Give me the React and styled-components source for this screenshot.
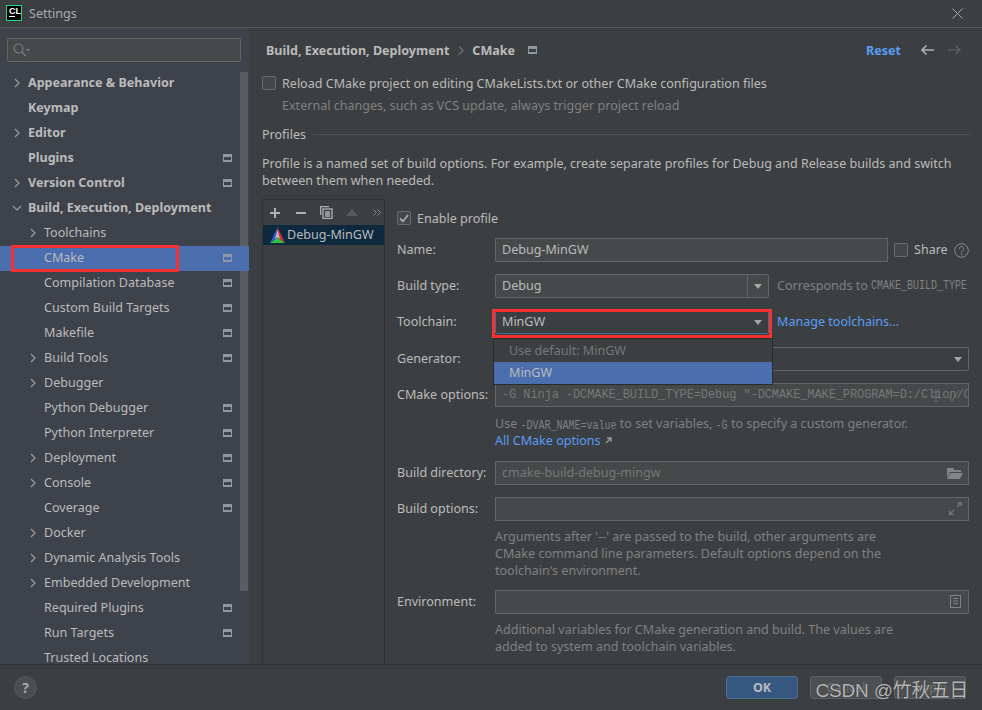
import React from 'react';
import styled, { createGlobalStyle } from 'styled-components';

const GlobalStyle = createGlobalStyle`
  html, body {
    margin: 0;
    padding: 0;
    background: #3c3f41;
  }
  * {
    box-sizing: border-box;
  }
`;

const Window = styled.div`
  position: relative;
  display: flex;
  flex-direction: column;
  width: 982px;
  height: 710px;
  overflow: hidden;
  background: #3c3f41;
  color: #bbbbbb;
  font-family: "Noto Sans", "Open Sans", sans-serif;
  font-size: 12.55px;
`;

const TitleBar = styled.div`
  display: flex;
  align-items: center;
  flex: 0 0 28px;
  padding: 0 19px 1px 6px;
  border-bottom: 1px solid #555759;
`;

const Logo = styled.div`
  display: flex;
  flex-direction: column;
  width: 16px;
  height: 16px;
  padding: 1px 0 0 2px;
  background: #000;
  border: 1px solid #21d789;
  color: #fff;
  font-family: "Liberation Sans", sans-serif;
  font-size: 9px;
  font-weight: 700;
  line-height: 8px;
  &::after {
    content: '';
    width: 6px;
    height: 1px;
    margin-top: 1px;
    background: #fff;
  }
`;

const WindowTitle = styled.span`
  margin-left: 7px;
  color: #a9abad;
`;

const CloseButton = styled.svg`
  margin-left: auto;
`;

const Body = styled.div`
  display: flex;
  flex: 1;
  min-height: 0;
`;

const Sidebar = styled.aside`
  position: relative;
  flex: 0 0 249px;
  overflow: hidden;
  background: #3e424b;
`;

const SearchBox = styled.div`
  display: flex;
  align-items: center;
  height: 24px;
  margin: 10px 8px 9px 7px;
  padding-left: 5px;
  background: #45494a;
  border: 1px solid #646464;
  border-radius: 2px;
`;

const Scrollbar = styled.div`
  position: absolute;
  top: 44px;
  right: 1px;
  width: 8px;
  height: 519px;
  background: #595c62;
`;

const Tree = styled.div`
  display: flex;
  flex-direction: column;
`;

const TreeRow = styled.div`
  position: relative;
  display: flex;
  align-items: center;
  flex: 0 0 25px;
  padding-left: ${({ $depth }) => 12 + $depth * 16}px;
  padding-right: 17px;
  padding-bottom: 2px;
  background: ${({ $selected }) => ($selected ? '#4b6eaf' : 'transparent')};
  font-weight: ${({ $depth }) => ($depth === 0 ? 700 : 400)};
  white-space: nowrap;
`;

const Arrow = styled.span`
  display: flex;
  flex: 0 0 16px;
  align-items: center;
`;

const SideBadge = styled.svg`
  margin-left: auto;
`;

const CrumbBadge = styled.svg`
  margin-left: 13px;
`;

const RedBox = styled.div`
  position: absolute;
  top: ${({ $top }) => $top}px;
  left: ${({ $left }) => $left}px;
  width: ${({ $w }) => $w}px;
  height: ${({ $h }) => $h}px;
  border: 3px solid #f73131;
  pointer-events: none;
  z-index: 3;
`;

const Main = styled.main`
  display: flex;
  flex: 1;
  flex-direction: column;
  min-width: 0;
  padding: 0 12px 0 13px;
`;

const Breadcrumb = styled.div`
  display: flex;
  align-items: center;
  flex: 0 0 44px;
  padding-left: 4px;
  font-weight: 700;
`;

const CrumbSep = styled.svg`
  margin: 0 8px 0 9px;
`;

const ResetLink = styled.span`
  margin-left: auto;
  color: #589df6;
  font-weight: 700;
`;

const NavIcons = styled.div`
  display: flex;
  gap: 14px;
  margin: 0 8px 0 19px;
`;

const CheckRow = styled.label`
  display: flex;
  align-items: center;
  gap: 6px;
  height: ${({ $h }) => $h}px;
`;

const Check = styled.span`
  display: flex;
  align-items: center;
  justify-content: center;
  flex: 0 0 14px;
  height: 14px;
  margin-left: ${({ $left = 0 }) => $left}px;
  background: #43494a;
  border: 1px solid #6b6b6b;
  border-radius: 2px;
`;

const SubText = styled.div`
  height: 22px;
  padding-left: 20px;
  color: #808080;
  line-height: 24px;
`;

const GroupTitle = styled.div`
  display: flex;
  align-items: center;
  gap: 7px;
  height: 18px;
  margin-top: 9px;
  &::after {
    content: '';
    flex: 1;
    height: 1px;
    background: #515151;
  }
`;

const Paragraph = styled.p`
  margin: 12px 0 0;
  line-height: 17px;
`;

const ProfilesArea = styled.div`
  display: flex;
  flex: 1;
  min-height: 0;
  margin-top: 10px;
`;

const ProfileList = styled.div`
  flex: 0 0 123px;
  background: #3c3f41;
  border: 1px solid #323232;
  border-bottom: 0;
`;

const ListToolbar = styled.div`
  display: flex;
  align-items: center;
  height: 25px;
  padding-left: 6px;
`;

const ToolIcon = styled.svg`
  margin-left: ${({ $left = 0 }) => $left}px;
`;

const ProfileItem = styled.div`
  display: flex;
  align-items: center;
  gap: 2px;
  height: 20px;
  padding: 0 0 1px 7px;
  background: #0d293e;
`;

const Form = styled.div`
  display: flex;
  flex: 1;
  flex-direction: column;
  min-width: 0;
  margin-left: 12px;
  padding: 9px 1px 0 0;
`;

const Row = styled.div`
  display: flex;
  align-items: center;
  height: 24px;
  margin-top: ${({ $top = 12 }) => $top}px;
`;

const Label = styled.span`
  flex: 0 0 98px;
  padding-bottom: 1px;
`;

const Field = styled.div`
  position: relative;
  display: flex;
  align-items: center;
  flex: ${({ $w }) => ($w ? `0 0 ${$w}px` : 1)};
  height: 24px;
  min-width: 0;
  padding: 0 6px 1px;
  overflow: hidden;
  background: ${({ $flat }) => ($flat ? '#3c3f41' : '#45494a')};
  border: 1px solid ${({ $focus }) => ($focus ? '#466d94' : '#646464')};
  border-radius: ${({ $round }) => ($round ? '2px' : '0')};
  color: ${({ $dim }) => ($dim ? '#777777' : '#bbbbbb')};
  white-space: nowrap;
`;

const MonoValue = styled.span`
  font-family: "Liberation Mono", monospace;
  font-size: 12px;
  letter-spacing: -0.1px;
`;

const FieldIcon = styled.svg`
  position: absolute;
  top: 4px;
  right: ${({ $right = 5 }) => $right}px;
`;

const ComboArrow = styled.div`
  position: absolute;
  top: 0;
  right: 0;
  bottom: 0;
  display: flex;
  align-items: center;
  justify-content: center;
  width: 21px;
  border-left: ${({ $split }) => ($split ? '1px solid #646464' : '0')};
  background: ${({ $flat }) => ($flat ? '#3c3f41' : '#45494a')};
  &::after {
    content: '';
    border-left: 4px solid transparent;
    border-right: 4px solid transparent;
    border-top: 5px solid #a6a6a6;
  }
`;

const FieldWrap = styled.div`
  position: relative;
  display: flex;
  flex: 0 0 ${({ $w }) => $w}px;
  min-width: 0;
`;

const Popup = styled.div`
  position: absolute;
  top: 28px;
  left: -2px;
  width: 280px;
  height: 47px;
  padding: 1px 0 0;
  background: #3c3f41;
  border: 1px solid #2b2b2b;
  z-index: 2;
`;

const PopupItem = styled.div`
  display: flex;
  align-items: center;
  height: 22px;
  padding: 0 0 1px 15px;
  background: ${({ $active }) => ($active ? '#4b6eaf' : 'transparent')};
  color: ${({ $active }) => ($active ? '#bbbbbb' : '#777777')};
`;

const ManageLink = styled.span`
  margin-left: 8px;
  padding-bottom: 1px;
  color: #589df6;
`;

const NoteAfter = styled.span`
  display: flex;
  align-items: center;
  gap: 3px;
  margin-left: 8px;
  padding-bottom: 1px;
  color: #808080;
  white-space: nowrap;
`;

const SmallMono = styled.span`
  display: inline-block;
  font-family: "Liberation Mono", monospace;
  font-size: 10px;
  line-height: 10px;
  transform: scaleY(1.25);
`;

const ShareLabel = styled.span`
  margin: 0 6px;
  padding-bottom: 1px;
`;

const Hint = styled.div`
  margin: ${({ $top = 7 }) => $top}px 0 0 98px;
  color: #808080;
  line-height: 17px;
`;

const HintLink = styled.span`
  display: flex;
  align-items: center;
  gap: 4px;
  height: 17px;
  color: #589df6;
`;

const Footer = styled.footer`
  display: flex;
  align-items: center;
  flex: 0 0 46px;
  padding: 0 16px 0 14px;
  border-top: 1px solid #323232;
`;

const HelpButton = styled.div`
  display: flex;
  align-items: center;
  justify-content: center;
  width: 23px;
  height: 23px;
  margin-right: auto;
  background: #4b4e50;
  border: 1px solid #555759;
  border-radius: 50%;
  color: #a8a8a8;
  font-weight: 700;
  font-size: 14px;
`;

const DialogButton = styled.button`
  width: 72px;
  height: 23px;
  margin-left: 12px;
  padding: 0;
  background: ${({ $primary }) => ($primary ? '#365880' : '#4c5052')};
  border: 1px solid ${({ $primary }) => ($primary ? '#4c708c' : '#5e6060')};
  border-radius: 3px;
  color: ${({ $primary }) => ($primary ? '#bbbbbb' : '#6f7274')};
  font-family: inherit;
  font-size: 12.5px;
  font-weight: ${({ $primary }) => ($primary ? 700 : 400)};
`;

const Watermark = styled.div`
  position: absolute;
  right: 14px;
  bottom: 8px;
  color: rgba(214, 214, 214, 0.82);
  font-family: "Liberation Sans", "Noto Sans CJK SC", sans-serif;
  font-size: 19px;
  letter-spacing: -0.2px;
  text-shadow: 0 0 1px #222;
  z-index: 4;
`;

const Chevron = ({ open }) => (
  <svg width="10" height="10" viewBox="0 0 10 10" fill="none" stroke="#9a9da0" strokeWidth="1.2">
    {open ? <path d="M1 3l4 4 4-4" /> : <path d="M3 1l4 4-4 4" />}
  </svg>
);

const TREE = [
  { label: 'Appearance & Behavior', depth: 0, arrow: 'closed' },
  { label: 'Keymap', depth: 0 },
  { label: 'Editor', depth: 0, arrow: 'closed' },
  { label: 'Plugins', depth: 0, badge: true },
  { label: 'Version Control', depth: 0, arrow: 'closed', badge: true },
  { label: 'Build, Execution, Deployment', depth: 0, arrow: 'open' },
  { label: 'Toolchains', depth: 1, arrow: 'closed' },
  { label: 'CMake', depth: 1, badge: true, selected: true },
  { label: 'Compilation Database', depth: 1, badge: true },
  { label: 'Custom Build Targets', depth: 1, badge: true },
  { label: 'Makefile', depth: 1, badge: true },
  { label: 'Build Tools', depth: 1, arrow: 'closed', badge: true },
  { label: 'Debugger', depth: 1, arrow: 'closed' },
  { label: 'Python Debugger', depth: 1, badge: true },
  { label: 'Python Interpreter', depth: 1, badge: true },
  { label: 'Deployment', depth: 1, arrow: 'closed', badge: true },
  { label: 'Console', depth: 1, arrow: 'closed', badge: true },
  { label: 'Coverage', depth: 1, badge: true },
  { label: 'Docker', depth: 1, arrow: 'closed' },
  { label: 'Dynamic Analysis Tools', depth: 1, arrow: 'closed' },
  { label: 'Embedded Development', depth: 1, arrow: 'closed' },
  { label: 'Required Plugins', depth: 1, badge: true },
  { label: 'Run Targets', depth: 1, badge: true },
  { label: 'Trusted Locations', depth: 1 },
];

export default function App() {
  return (
    <>
      <GlobalStyle />
      <Window>
        <TitleBar>
          <Logo>CL</Logo>
          <WindowTitle>Settings</WindowTitle>
          <CloseButton width="11" height="11" viewBox="0 0 11 11" stroke="#a9a9a9" strokeWidth="1">
            <path d="M.5.5l10 10M10.5.5l-10 10" />
          </CloseButton>
        </TitleBar>
        <Body>
          <Sidebar>
            <SearchBox>
              <svg width="17" height="14" viewBox="0 0 17 14" fill="none" stroke="#7d7f81" strokeWidth="1.2">
                <circle cx="5.5" cy="5.5" r="4.5" />
                <path d="M9 9l3.5 4" />
                <path d="M13 6h4l-2 2.5z" fill="#7d7f81" stroke="none" />
              </svg>
            </SearchBox>
            <Scrollbar />
            <Tree>
              {TREE.map((item) => (
                <TreeRow key={item.label} $depth={item.depth} $selected={item.selected}>
                  <Arrow>{item.arrow && <Chevron open={item.arrow === 'open'} />}</Arrow>
                  {item.label}
                  {item.badge && (
                    <SideBadge width="9" height="8" viewBox="0 0 9 8">
                      <rect width="9" height="8" fill="#8f97a0" />
                      <rect x="1" y="3" width="7" height="3" fill={item.selected ? '#4b6eaf' : '#3e424b'} />
                    </SideBadge>
                  )}
                  {item.selected && <RedBox $top={-1} $left={11} $w={168} $h={27} />}
                </TreeRow>
              ))}
            </Tree>
          </Sidebar>
          <Main>
            <Breadcrumb>
              <span>Build, Execution, Deployment</span>
              <CrumbSep width="6" height="9" viewBox="0 0 6 9" fill="none" stroke="#9a9da0">
                <path d="M1 .5l4 4-4 4" />
              </CrumbSep>
              <span>CMake</span>
              <CrumbBadge width="9" height="8" viewBox="0 0 9 8">
                <rect width="9" height="8" fill="#8f97a0" />
                <rect x="1" y="3" width="7" height="3" fill="#3c3f41" />
              </CrumbBadge>
              <ResetLink>Reset</ResetLink>
              <NavIcons>
                <svg width="14" height="12" viewBox="0 0 14 12" fill="none" stroke="#afb1b3" strokeWidth="1.6">
                  <path d="M14 6H2M6.500 1.500L2 6l4.500 4.500" />
                </svg>
                <svg width="14" height="12" viewBox="0 0 14 12" fill="none" stroke="#5a5d5f" strokeWidth="1.6">
                  <path d="M0 6h12M7.500 1.500L12 6l-4.500 4.500" />
                </svg>
              </NavIcons>
            </Breadcrumb>
            <CheckRow $h={22}>
              <Check />
              Reload CMake project on editing CMakeLists.txt or other CMake configuration files
            </CheckRow>
            <SubText>External changes, such as VCS update, always trigger project reload</SubText>
            <GroupTitle>Profiles</GroupTitle>
            <Paragraph>
              Profile is a named set of build options. For example, create separate profiles for Debug and Release builds and switch
              <br />
              between them when needed.
            </Paragraph>
            <ProfilesArea>
              <ProfileList>
                <ListToolbar>
                  <ToolIcon width="12" height="12" viewBox="0 0 12 12" stroke="#afb1b3" strokeWidth="2"><path d="M6 1v10M1 6h10" /></ToolIcon>
                  <ToolIcon $left={14} width="12" height="12" viewBox="0 0 12 12" stroke="#afb1b3" strokeWidth="2"><path d="M1 6h10" /></ToolIcon>
                  <ToolIcon $left={13} width="13" height="13" viewBox="0 0 13 13" fill="none" stroke="#afb1b3" strokeWidth="1.300">
                    <path d="M.7 9V.7H9" />
                    <rect x="3" y="3" width="9" height="9.500" />
                    <path d="M5 6h5M5 8h5M5 10h5" />
                  </ToolIcon>
                  <ToolIcon $left={13} width="12" height="7" viewBox="0 0 12 7"><path d="M6 0l6 7H0z" fill="#595b5d" /></ToolIcon>
                  <ToolIcon $left={15} width="8" height="7" viewBox="0 0 8 7" fill="none" stroke="#8a8c8e"><path d="M.5.500l3 3-3 3M4.500.500l3 3-3 3" /></ToolIcon>
                </ListToolbar>
                <ProfileItem>
                  <svg width="15" height="16" viewBox="0 0 15 16">
                    <path d="M7.500 0L0 16l7.500-5z" fill="#3557d6" />
                    <path d="M7.500 0L15 16l-7.500-5z" fill="#d62f2f" />
                    <path d="M0 16h15l-7.500-5z" fill="#2fc43b" />
                    <path d="M7.500 3L5 12l2.500-1.500L10 12z" fill="#b9bcc0" />
                  </svg>
                  Debug-MinGW
                </ProfileItem>
              </ProfileList>
              <Form>
                <CheckRow $h={20}>
                  <Check>
                    <svg width="10" height="9" viewBox="0 0 10 9" fill="none" stroke="#a9a9a9" strokeWidth="1.800"><path d="M1 4.500l3 3 5-6.500" /></svg>
                  </Check>
                  Enable profile
                </CheckRow>
                <Row $top={10}>
                  <Label>Name:</Label>
                  <Field $w={393}>Debug-MinGW</Field>
                  <Check $left={6} />
                  <ShareLabel>Share</ShareLabel>
                  <svg width="15" height="15" viewBox="0 0 15 15" fill="none">
                    <circle cx="7.500" cy="7.500" r="6.800" stroke="#8c8e90" />
                    <path d="M5.300 5.800a2.200 2.200 0 1 1 3.400 1.800c-.8.500-1.200.9-1.200 1.900M7.500 10.500v1.500" stroke="#8c8e90" />
                  </svg>
                </Row>
                <Row>
                  <Label>Build type:</Label>
                  <Field $w={274} $round>
                    Debug
                    <ComboArrow $split />
                  </Field>
                  <NoteAfter>
                    Corresponds to <SmallMono>CMAKE_BUILD_TYPE</SmallMono>
                  </NoteAfter>
                </Row>
                <Row>
                  <Label>Toolchain:</Label>
                  <FieldWrap $w={274}>
                    <Field $focus $flat $round>
                      MinGW
                      <ComboArrow $flat />
                    </Field>
                    <RedBox $top={-1} $left={-3} $w={280} $h={29} />
                    <Popup>
                      <PopupItem>Use default: MinGW</PopupItem>
                      <PopupItem $active>MinGW</PopupItem>
                    </Popup>
                  </FieldWrap>
                  <ManageLink>Manage toolchains...</ManageLink>
                </Row>
                <Row $top={13}>
                  <Label>Generator:</Label>
                  <Field $flat $round>
                    <ComboArrow $flat />
                  </Field>
                </Row>
                <Row>
                  <Label>CMake options:</Label>
                  <Field $dim>
                    <MonoValue>-G Ninja -DCMAKE_BUILD_TYPE=Debug "-DCMAKE_MAKE_PROGRAM=D:/Clion/CLion 2021/bin/ninja"</MonoValue>
                    <FieldIcon $right={26} width="12" height="15" viewBox="0 0 12 15" stroke="#6e7072" fill="none">
                      <path d="M6 1v13M2 4h8M2 8h8" />
                    </FieldIcon>
                    <FieldIcon $right={8} width="12" height="15" viewBox="0 0 12 15" stroke="#6e7072" fill="none">
                      <path d="M1 9l3 4 7-11" />
                    </FieldIcon>
                  </Field>
                </Row>
                <Hint $top={8}>
                  Use <SmallMono>-DVAR_NAME=value</SmallMono> to set variables, <SmallMono>-G</SmallMono> to specify a custom generator.
                  <HintLink>
                    All CMake options
                    <svg width="7" height="7" viewBox="0 0 7 7" fill="none" stroke="#9a9c9e" strokeWidth="1.300">
                      <path d="M1 6l5-5M2 1h4v4" />
                    </svg>
                  </HintLink>
                </Hint>
                <Row>
                  <Label>Build directory:</Label>
                  <Field $dim>
                    cmake-build-debug-mingw
                    <FieldIcon width="16" height="14" viewBox="0 0 16 14">
                      <path d="M0 2h6l1.500 2H14v2H3L0 12z" fill="#80858a" />
                      <path d="M3.500 7H16l-3 6H0z" fill="#80858a" />
                    </FieldIcon>
                  </Field>
                </Row>
                <Row>
                  <Label>Build options:</Label>
                  <Field>
                    <FieldIcon width="13" height="13" viewBox="0 0 13 13" fill="#6f7173" $right={6}>
                      <path d="M8 0h5v5l-2-2-2.500 2.500-1-1L10 2zM5 13H0V8l2 2 2.500-2.500 1 1L3 11z" />
                    </FieldIcon>
                  </Field>
                </Row>
                <Hint>
                  Arguments after '--' are passed to the build, other arguments are
                  <br />
                  CMake command line parameters. Default options depend on the
                  <br />
                  toolchain's environment.
                </Hint>
                <Row $top={11}>
                  <Label>Environment:</Label>
                  <Field>
                    <FieldIcon width="11" height="13" viewBox="0 0 11 13" fill="none" stroke="#808284" $right={7}>
                      <rect x=".5" y=".5" width="10" height="12" />
                      <path d="M3 3.500h5M3 6h5M3 8.500h5" />
                    </FieldIcon>
                  </Field>
                </Row>
                <Hint>
                  Additional variables for CMake generation and build. The values are
                  <br />
                  added to system and toolchain variables.
                </Hint>
              </Form>
            </ProfilesArea>
          </Main>
        </Body>
        <Footer>
          <HelpButton>?</HelpButton>
          <DialogButton $primary>OK</DialogButton>
          <DialogButton>Cancel</DialogButton>
          <DialogButton>Apply</DialogButton>
        </Footer>
        <Watermark>CSDN @竹秋五日</Watermark>
      </Window>
    </>
  );
}
